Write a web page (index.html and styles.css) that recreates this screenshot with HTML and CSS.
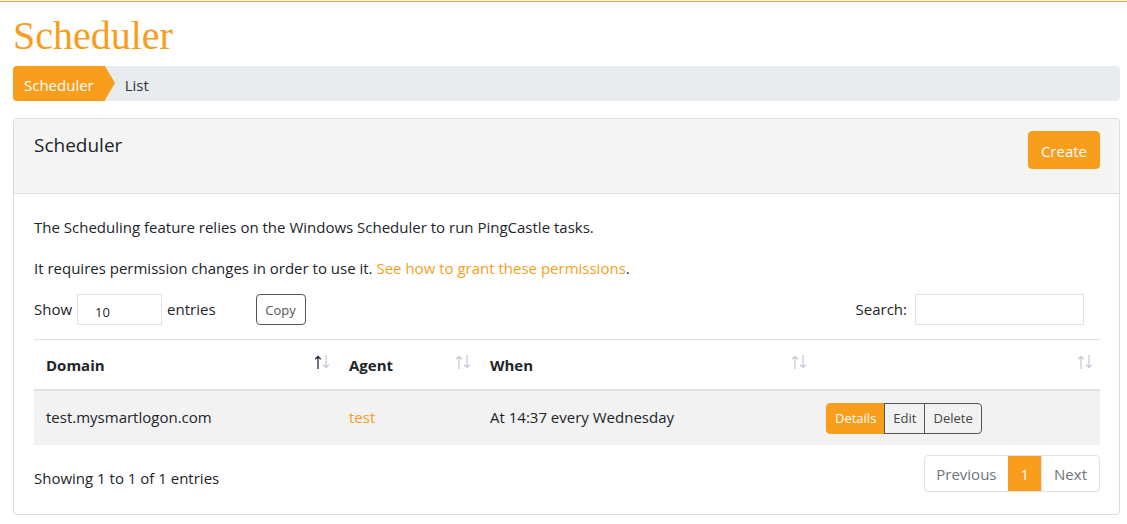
FILE: index.html
```html
<!DOCTYPE html>
<html>
<head>
<meta charset="utf-8">
<link rel="stylesheet" href="styles.css">
</head>
<body>
<div class="topline"></div>
<div class="page">
  <h1 class="title">Scheduler</h1>
  <nav class="crumbs">
    <span class="crumb-active">Scheduler</span>
    <span class="crumb">List</span>
  </nav>
  <section class="card">
    <header class="card-head">
      <h3 class="card-title">Scheduler</h3>
      <button class="btn-create">Create</button>
    </header>
    <div class="card-body">
      <p class="para">The Scheduling feature relies on the Windows Scheduler to run PingCastle tasks.</p>
      <p class="para last">It requires permission changes in order to use it. <a class="link" href="#">See how to grant these permissions</a>.</p>
      <div class="controls">
        <div class="length">
          <span>Show</span>
          <span class="len-input">10</span>
          <span>entries</span>
          <button class="btn-copy">Copy</button>
        </div>
        <div class="filter">
          <span>Search:</span>
          <span class="search-input"></span>
        </div>
      </div>
      <table class="grid">
        <thead>
          <tr>
            <th class="c1">Domain<svg class="sort" viewBox="0 0 16 16"><path class="up on" d="M4 2.5V15M1.2 5.3L4 2.5 6.8 5.3"/><path class="dn" d="M12 1V13.5M9.2 10.7L12 13.5 14.8 10.7"/></svg></th>
            <th class="c2">Agent<svg class="sort" viewBox="0 0 16 16"><path class="up" d="M4 2.5V15M1.2 5.3L4 2.5 6.8 5.3"/><path class="dn" d="M12 1V13.5M9.2 10.7L12 13.5 14.8 10.7"/></svg></th>
            <th class="c3">When<svg class="sort" viewBox="0 0 16 16"><path class="up" d="M4 2.5V15M1.2 5.3L4 2.5 6.8 5.3"/><path class="dn" d="M12 1V13.5M9.2 10.7L12 13.5 14.8 10.7"/></svg></th>
            <th class="c4"><svg class="sort" viewBox="0 0 16 16"><path class="up" d="M4 2.5V15M1.2 5.3L4 2.5 6.8 5.3"/><path class="dn" d="M12 1V13.5M9.2 10.7L12 13.5 14.8 10.7"/></svg></th>
          </tr>
        </thead>
        <tbody>
          <tr>
            <td>test.mysmartlogon.com</td>
            <td><a class="link" href="#">test</a></td>
            <td>At 14:37 every Wednesday</td>
            <td>
              <div class="btn-group">
                <span class="gb gb-on">Details</span><span class="gb">Edit</span><span class="gb">Delete</span>
              </div>
            </td>
          </tr>
        </tbody>
      </table>
      <div class="foot">
        <div class="info">Showing 1 to 1 of 1 entries</div>
        <div class="pager">
          <span class="pg">Previous</span><span class="pg pg-on">1</span><span class="pg">Next</span>
        </div>
      </div>
    </div>
  </section>
</div>
</body>
</html>
```

FILE: styles.css
```css
* { box-sizing: border-box; }
html, body { margin: 0; padding: 0; background: #fff; }
body {
  font-family: "Open Sans", "Noto Sans", sans-serif;
  font-size: 15px;
  color: #212529;
  padding-top: 1px;
}
.topline { height: 1px; background: #f0a13a; }
.page { padding: 0 7px 0 13px; }
.title {
  font-family: "Liberation Serif", "Times New Roman", serif;
  font-weight: normal;
  font-size: 40px;
  line-height: 48px;
  color: #f99d1c;
  margin: 10px 0 6px 0;
}
.crumbs {
  display: flex;
  align-items: center;
  height: 35px;
  background: #e9ecef;
  border-radius: 4px;
}
.crumb-active {
  position: relative;
  height: 35px;
  line-height: 33px;
  padding: 3px 11px 0 11px;
  background: #f99d1c;
  color: #fff;
  border-radius: 4px 0 0 4px;
}
.crumb-active::after {
  content: "";
  position: absolute;
  right: -10px;
  top: 0;
  border-top: 17.5px solid transparent;
  border-bottom: 17.5px solid transparent;
  border-left: 10px solid #f99d1c;
}
.crumb { margin-left: 20px; padding-top: 3px; color: #333; }
.card {
  margin-top: 17px;
  border: 1px solid #dcdcdc;
  border-radius: 4px;
}
.card-head {
  height: 75px;
  background: #f5f5f5;
  border-bottom: 1px solid #dcdcdc;
  padding: 12px 19px 0 20px;
  display: flex;
  justify-content: space-between;
  align-items: flex-start;
  border-radius: 4px 4px 0 0;
}
.card-title {
  margin: 2px 0 0 0;
  font-size: 19px;
  font-weight: normal;
  line-height: 24px;
  color: #212529;
}
.btn-create {
  height: 38px;
  padding: 2px 12px 0 12px;
  background: #f99d1c;
  border: 1px solid #f99d1c;
  border-radius: 4px;
  color: #fff;
  font-family: inherit;
  font-size: 15px;
}
.card-body { padding: 21px 19px 22px 20px; }
.para { margin: 0 0 17px 0; line-height: 24px; }
.para.last { margin-bottom: 14px; }
.link { color: #f99d1c; text-decoration: none; }
.controls {
  display: flex;
  justify-content: space-between;
  align-items: center;
  height: 31px;
  margin-bottom: 14px;
}
.length { display: flex; align-items: center; }
.length > span:first-child, .length > span:nth-child(3) { margin-top: -2px; }
.len-input {
  display: inline-block;
  width: 85px;
  height: 31px;
  border: 1px solid #e2e2e2;
  margin: 0 5px 0 5px;
  padding: 7px 0 0 17px;
  font-size: 13px;
  line-height: 20px;
}
.btn-copy {
  margin-left: 40px;
  height: 31px;
  width: 50px;
  padding: 0;
  background: #fff;
  border: 1px solid #555;
  border-radius: 4px;
  color: #555;
  font-family: inherit;
  font-size: 13px;
}
.filter { display: flex; align-items: center; margin-right: 16px; }
.filter > span:first-child { margin-top: -2px; }
.search-input {
  display: inline-block;
  width: 169px;
  height: 31px;
  border: 1px solid #e2e2e2;
  margin-left: 8px;
}
.grid {
  width: 100%;
  border-collapse: collapse;
  border-top: 1px solid #dee2e6;
}
.grid th {
  position: relative;
  text-align: left;
  font-weight: bold;
  height: 50px;
  padding: 2px 12px 0 12px;
  border-bottom: 2px solid #dee2e6;
  font-size: 15px;
}
.c1 { width: 303px; }
.c2 { width: 141px; }
.c3 { width: 336px; }
.grid td {
  height: 55px;
  padding: 0 12px 1px 12px;
  background: #f2f2f2;
}
.sort {
  position: absolute;
  right: 7px;
  top: 14px;
  width: 16px;
  height: 16px;
  fill: none;
  stroke-width: 1.3;
}
.sort .up, .sort .dn { stroke: #c3cdd8; }
.sort .up.on { stroke: #1f2d3d; }
.btn-group { display: inline-flex; margin-top: 2px; }
.gb {
  display: inline-block;
  height: 31px;
  line-height: 29px;
  padding: 0 8px;
  border: 1px solid #555;
  margin-left: -1px;
  font-size: 13px;
  color: #444;
}
.gb:first-child { border-radius: 4px 0 0 4px; margin-left: 0; }
.gb:last-child { border-radius: 0 4px 4px 0; }
.gb-on { background: #f99d1c; border-color: #f99d1c; color: #fff; }
.foot {
  display: flex;
  justify-content: space-between;
  align-items: flex-start;
  margin-top: 10px;
}
.info { margin-top: 11px; line-height: 24px; }
.pager {
  display: flex;
  border: 1px solid #dee2e6;
  border-radius: 4px;
  overflow: hidden;
}
.pg {
  display: inline-block;
  height: 35px;
  line-height: 35px;
  padding: 1px 12px 0 12px;
  color: #6c757d;
  border-left: 1px solid #dee2e6;
  font-size: 15px;
}
.pg:first-child { border-left: none; padding: 1px 11px 0 11px; }
.pg-on { background: #f99d1c; color: #fff; border-color: #f99d1c; padding: 1px 12px 0 12px; }
```
